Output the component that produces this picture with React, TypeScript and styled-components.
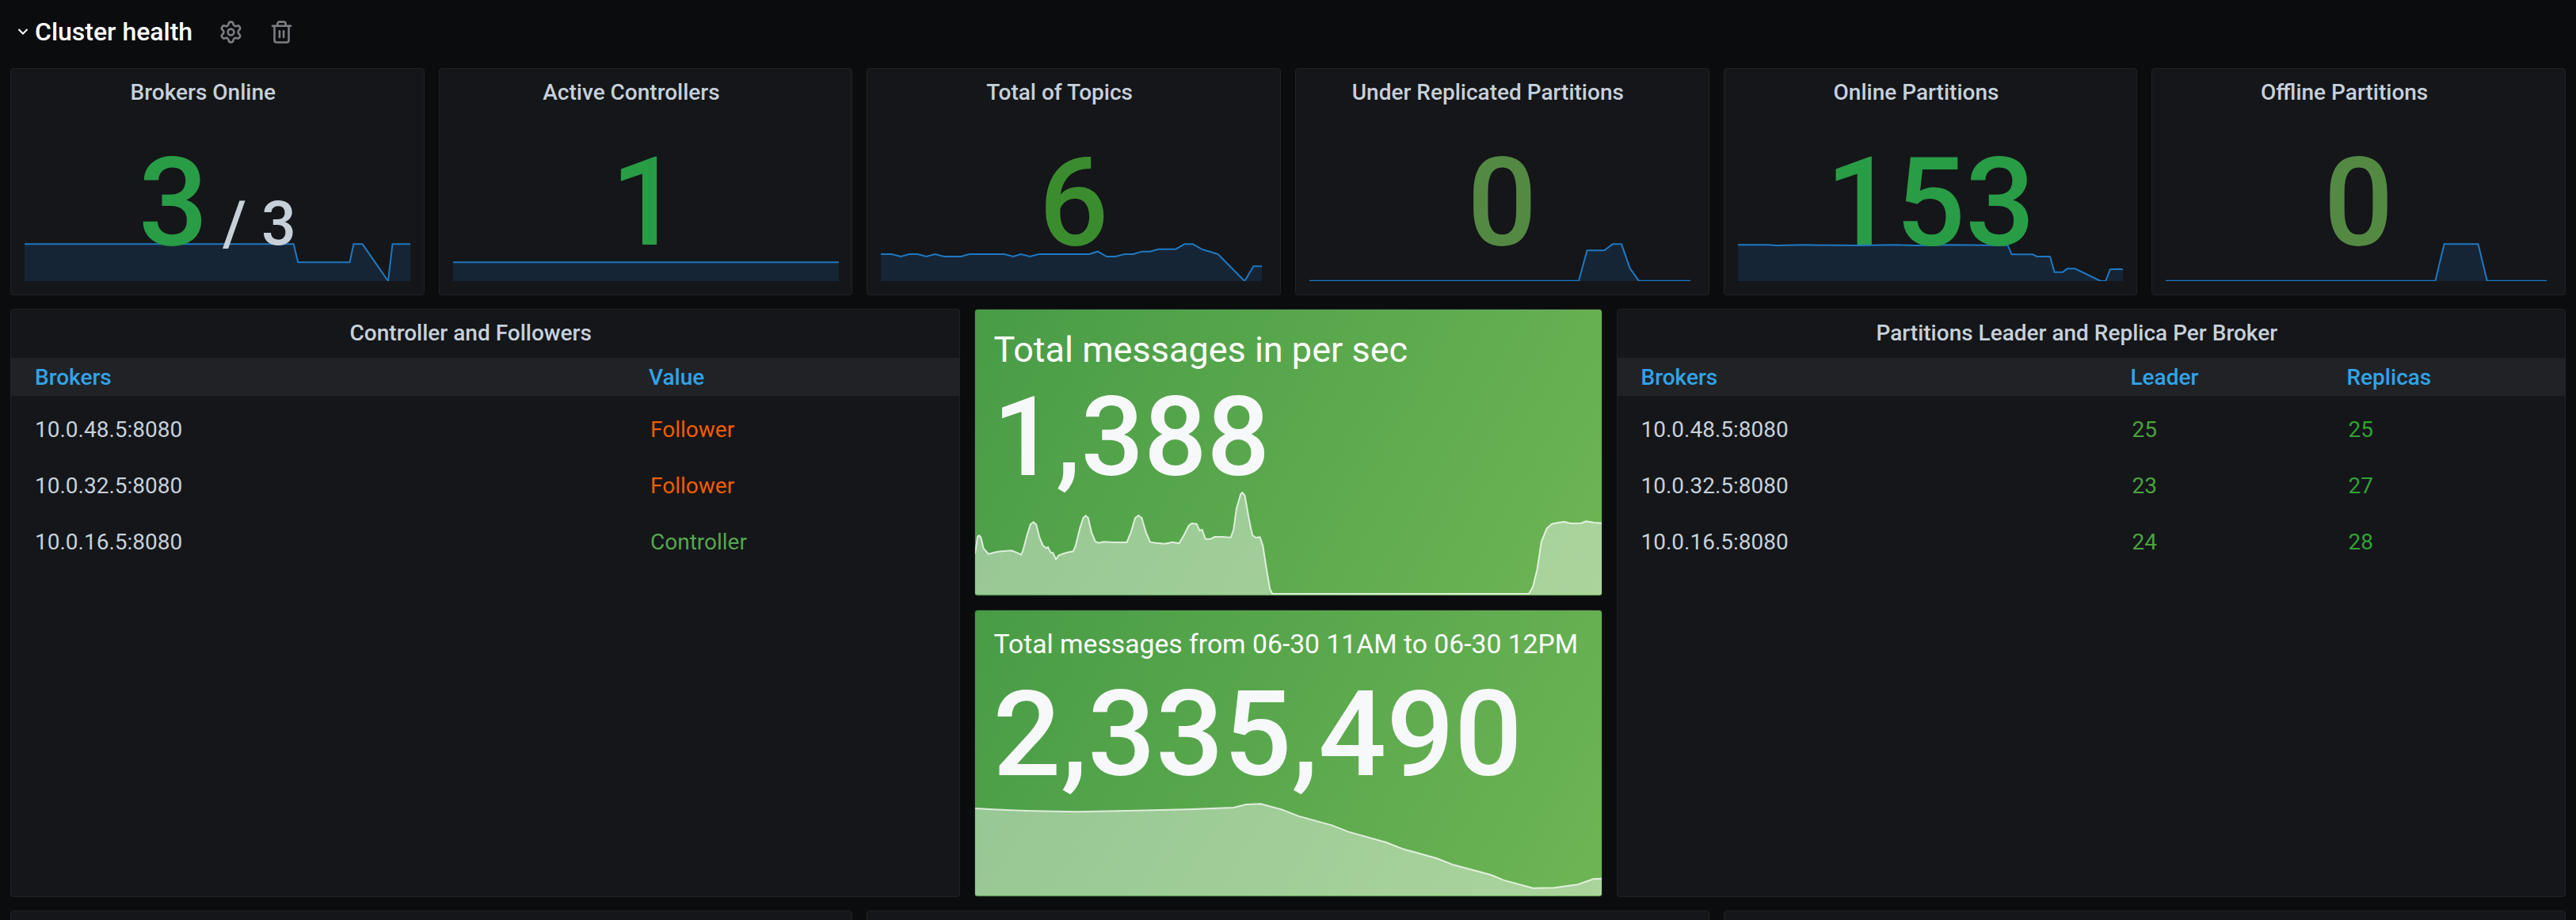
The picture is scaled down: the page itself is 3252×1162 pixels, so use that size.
import styled, { createGlobalStyle } from "styled-components";
import { Settings, Trash2 } from "lucide-react";

const GlobalStyle = createGlobalStyle`
  html, body {
    margin: 0;
    height: 100%;
    overflow: hidden;
    background: #0b0c0e;
    font-family: Roboto, "Liberation Sans", sans-serif;
  }
`;

type Series = {
  x: number;
  width: number;
  bottom: number;
  points: number[][];
};

const topPanels: {
  title: string;
  value: string;
  color: string;
  suffix?: string;
  chartWidth: number;
  series: Series;
}[] = [
  {
    title: "Brokers Online",
    value: "3",
    suffix: "/ 3",
    color: "#299c46",
    chartWidth: 487,
    series: {
      x: 43,
      width: 694,
      bottom: 1067,
      points: [[43, 927], [527, 927], [535, 996], [628, 996], [635, 927], [651, 927], [697, 1067], [705, 927], [737, 927]],
    },
  },
  {
    title: "Active Controllers",
    value: "1",
    color: "#299c46",
    chartWidth: 487,
    series: { x: 813, width: 693, bottom: 1067, points: [[813, 996], [1506, 996]] },
  },
  {
    title: "Total of Topics",
    value: "6",
    color: "#3b8c2e",
    chartWidth: 481,
    series: {
      x: 46,
      width: 685,
      bottom: 887,
      points: [
        [46, 785], [65, 785], [82, 794], [97, 785], [112, 785], [128, 794], [143, 785], [160, 794], [190, 794], [205, 785],
        [268, 785], [284, 794], [298, 785], [314, 794], [330, 785], [420, 785], [436, 775], [452, 794], [468, 794], [484, 785],
        [500, 785], [515, 775], [530, 775], [545, 766], [576, 766], [592, 747], [607, 747], [624, 767], [652, 785], [700, 887],
        [716, 831], [731, 831],
      ],
    },
  },
  {
    title: "Under Replicated Partitions",
    value: "0",
    color: "#548943",
    chartWidth: 481,
    series: {
      x: 815,
      width: 686,
      bottom: 887,
      points: [[815, 886], [1300, 886], [1315, 771], [1346, 771], [1361, 747], [1377, 747], [1392, 838], [1408, 886], [1501, 886]],
    },
  },
  {
    title: "Online Partitions",
    value: "153",
    color: "#299c46",
    chartWidth: 486,
    series: {
      x: 60,
      width: 692,
      bottom: 887,
      points: [
        [60, 750], [115, 750], [130, 752], [180, 750], [280, 752], [340, 750], [380, 752], [440, 750], [515, 751], [545, 751],
        [552, 786], [590, 786], [597, 794], [621, 794], [629, 853], [644, 853], [652, 840], [666, 840], [712, 887], [721, 887],
        [729, 843], [745, 841], [752, 843],
      ],
    },
  },
  {
    title: "Offline Partitions",
    value: "0",
    color: "#548943",
    chartWidth: 481,
    series: {
      x: 831,
      width: 684,
      bottom: 887,
      points: [[831, 886], [1315, 886], [1331, 747], [1392, 747], [1408, 886], [1515, 886]],
    },
  },
];

const ratePoints = [
  [38, 960], [44, 895], [48, 892], [52, 900], [58, 940], [70, 962], [80, 958], [90, 954], [100, 952], [125, 949],
  [135, 955], [148, 964], [152, 950], [162, 890], [170, 850], [177, 841], [184, 850], [192, 900], [200, 930], [208, 940],
  [212, 936], [218, 955], [224, 958], [231, 982], [237, 968], [250, 960], [262, 955], [272, 952], [278, 930], [288, 865],
  [296, 825], [302, 817], [308, 825], [316, 880], [325, 915], [333, 920], [345, 916], [370, 918], [400, 918], [410, 880],
  [420, 825], [428, 816], [436, 825], [446, 880], [456, 917], [470, 920], [490, 923], [510, 917], [525, 922], [535, 895],
  [548, 855], [555, 846], [567, 848], [574, 873], [580, 870], [588, 905], [600, 905], [610, 897], [630, 897], [648, 900],
  [655, 870], [662, 790], [672, 735], [676, 729], [682, 740], [692, 830], [700, 890], [708, 900], [718, 898], [725, 930],
  [735, 1030], [742, 1095], [748, 1113], [1360, 1113], [1370, 1085], [1380, 1020], [1390, 915], [1403, 865], [1415, 848],
  [1430, 843], [1445, 840], [1460, 846], [1485, 845], [1497, 838], [1515, 843], [1534, 845],
];

const totalPoints = [
  [38, 786], [80, 790], [160, 795], [280, 799], [400, 795], [540, 790], [655, 783], [685, 771], [720, 769], [770, 790],
  [810, 815], [890, 850], [930, 875], [1020, 915], [1060, 940], [1140, 975], [1180, 1000], [1270, 1038], [1300, 1058],
  [1370, 1088], [1420, 1087], [1475, 1075], [1515, 1053], [1534, 1052],
];

const Sparkline = ({ series, top, stroke, fill, lineWidth }: {
  series: Series;
  top: number;
  stroke: string;
  fill: string;
  lineWidth: number;
}) => {
  const line = series.points.map((p) => p.join(",")).join(" ");
  const last = series.x + series.width;
  const area = `${series.x},${series.bottom} ${line} ${last},${series.bottom}`;
  return (
    <svg viewBox={`${series.x} ${top} ${series.width} ${series.bottom - top}`} width="100%" height="100%" preserveAspectRatio="none">
      <polygon points={area} fill={fill} />
      <polyline points={line} fill="none" stroke={stroke} strokeWidth={lineWidth} vectorEffect="non-scaling-stroke" />
    </svg>
  );
};

export default function App() {
  return (
    <>
      <GlobalStyle />
      <Page>
        <RowHeader>
          <svg width="14" height="10" viewBox="0 0 14 10">
            <path d="M1.5 2 L7 7.5 L12.5 2" fill="none" stroke="#fff" strokeWidth="2" />
          </svg>
          <RowTitle>Cluster health</RowTitle>
          <RowActions>
            <Settings size={31} strokeWidth={2} />
            <Trash2 size={31} strokeWidth={2} />
          </RowActions>
        </RowHeader>

        <TopRow>
          {topPanels.map((p) => (
            <Panel key={p.title}>
              <PanelTitle>{p.title}</PanelTitle>
              <BigValue $color={p.color}>
                {p.value}
                {p.suffix && <Suffix>{p.suffix}</Suffix>}
              </BigValue>
              <SparkBox $width={p.chartWidth}>
                <Sparkline
                  series={p.series}
                  top={p.series.bottom - 150}
                  stroke="#1f78c1"
                  fill="#162535"
                  lineWidth={2}
                />
              </SparkBox>
            </Panel>
          ))}
        </TopRow>

        <MiddleRow>
          <Panel>
            <PanelTitle>Controller and Followers</PanelTitle>
            <TableHead $columns="775px 1fr">
              <span>Brokers</span>
              <span>Value</span>
            </TableHead>
            <TableBody>
              <TableRow $columns="777px 1fr">
                <span>10.0.48.5:8080</span>
                <Cell $color="#ee5d00">Follower</Cell>
              </TableRow>
              <TableRow $columns="777px 1fr">
                <span>10.0.32.5:8080</span>
                <Cell $color="#ee5d00">Follower</Cell>
              </TableRow>
              <TableRow $columns="777px 1fr">
                <span>10.0.16.5:8080</span>
                <Cell $color="#56a64b">Controller</Cell>
              </TableRow>
            </TableBody>
          </Panel>

          <StatColumn>
            <StatPanel>
              <StatTitle $size={45} $top={24}>Total messages in per sec</StatTitle>
              <StatValue $size={140} $top={6}>1,388</StatValue>
              <StatChart $height={139}>
                <Sparkline
                  series={{ x: 38, width: 1496, bottom: 1116, points: ratePoints }}
                  top={699}
                  stroke="rgba(255,255,255,0.75)"
                  fill="rgba(255,255,255,0.42)"
                  lineWidth={2}
                />
              </StatChart>
            </StatPanel>
            <StatPanel>
              <StatTitle $size={33.7} $top={16}>Total messages from 06-30 11AM to 06-30 12PM</StatTitle>
              <StatValue $size={151} $top={4}>2,335,490</StatValue>
              <StatChart $height={120}>
                <Sparkline
                  series={{ x: 38, width: 1496, bottom: 1116, points: totalPoints }}
                  top={756}
                  stroke="rgba(255,255,255,0.75)"
                  fill="rgba(255,255,255,0.42)"
                  lineWidth={2}
                />
              </StatChart>
            </StatPanel>
          </StatColumn>

          <Panel>
            <PanelTitle>Partitions Leader and Replica Per Broker</PanelTitle>
            <TableHead $columns="618px 273px 1fr">
              <span>Brokers</span>
              <span>Leader</span>
              <span>Replicas</span>
            </TableHead>
            <TableBody>
              <TableRow $columns="620px 273px 1fr">
                <span>10.0.48.5:8080</span>
                <Cell $color="#4ca23c">25</Cell>
                <Cell $color="#2fa332">25</Cell>
              </TableRow>
              <TableRow $columns="620px 273px 1fr">
                <span>10.0.32.5:8080</span>
                <Cell $color="#4ca23c">23</Cell>
                <Cell $color="#2fa332">27</Cell>
              </TableRow>
              <TableRow $columns="620px 273px 1fr">
                <span>10.0.16.5:8080</span>
                <Cell $color="#4ca23c">24</Cell>
                <Cell $color="#2fa332">28</Cell>
              </TableRow>
            </TableBody>
          </Panel>
        </MiddleRow>

        <BottomRow>
          <Panel />
          <Panel />
          <Panel />
        </BottomRow>
      </Page>
    </>
  );
}

const Page = styled.div`
  height: 1162px;
  padding: 0 13px;
  box-sizing: border-box;
  overflow: hidden;
`;

const RowHeader = styled.header`
  height: 86px;
  padding: 0 0 6px 9px;
  box-sizing: border-box;
  display: flex;
  align-items: center;
`;

const RowTitle = styled.h2`
  margin: 0 0 0 8px;
  color: #fff;
  font-size: 32px;
  font-weight: 500;
  line-height: 34px;
`;

const RowActions = styled.div`
  margin-left: 33px;
  display: flex;
  gap: 33px;
  color: #7b7e83;
`;

const TopRow = styled.section`
  display: grid;
  grid-template-columns: repeat(6, 1fr);
  gap: 18px;
  height: 287px;
  margin-bottom: 17px;
`;

const MiddleRow = styled.section`
  display: grid;
  grid-template-columns: 1198.5px 793px 1fr;
  gap: 18px;
  height: 743px;
  margin-bottom: 17px;
`;

const BottomRow = styled.section`
  display: grid;
  grid-template-columns: repeat(3, 1fr);
  gap: 18px;
  height: 300px;
`;

const Panel = styled.article`
  position: relative;
  box-sizing: border-box;
  background: #141619;
  border: 1px solid #202226;
  border-radius: 4px;
  overflow: hidden;
`;

const PanelTitle = styled.h3`
  margin: 0;
  height: 61px;
  padding-right: 36px;
  color: #c7d0d9;
  font-size: 28px;
  font-weight: 500;
  line-height: 59px;
  text-align: center;
`;

const BigValue = styled.div<{ $color: string }>`
  position: relative;
  z-index: 1;
  margin-top: 31px;
  color: ${(p) => p.$color};
  font-size: 155px;
  font-weight: 500;
  line-height: 155px;
  text-align: center;
`;

const Suffix = styled.span`
  margin-left: 18px;
  color: #c7d0d9;
  font-size: 77px;
`;

const SparkBox = styled.div<{ $width: number }>`
  position: absolute;
  left: 17px;
  bottom: 17px;
  width: ${(p) => p.$width}px;
  height: 50px;

  svg {
    display: block;
  }
`;

const TableHead = styled.div<{ $columns: string }>`
  display: grid;
  grid-template-columns: ${(p) => p.$columns};
  height: 48px;
  padding-left: 30px;
  align-items: center;
  background: #202226;
  color: #33a2e5;
  font-size: 28px;
  font-weight: 500;
`;

const TableBody = styled.div`
  padding-top: 7px;
`;

const TableRow = styled.div<{ $columns: string }>`
  display: grid;
  grid-template-columns: ${(p) => p.$columns};
  height: 71px;
  padding-left: 30px;
  align-items: center;
  color: #c7d0d9;
  font-size: 28px;
`;

const Cell = styled.span<{ $color: string }>`
  color: ${(p) => p.$color};
`;

const StatColumn = styled.div`
  display: flex;
  flex-direction: column;
  gap: 17px;
`;

const StatPanel = styled.article`
  position: relative;
  flex: 1;
  box-sizing: border-box;
  padding: 0 24px;
  background: linear-gradient(120deg, #489c46, #6eb555);
  border: 1px solid #202226;
  border-radius: 4px;
  overflow: hidden;
`;

const StatTitle = styled.h3<{ $size: number; $top: number }>`
  margin: 0;
  padding-top: ${(p) => p.$top}px;
  color: #fff;
  font-size: ${(p) => p.$size}px;
  font-weight: 400;
  line-height: 54px;
  white-space: nowrap;
`;

const StatValue = styled.div<{ $size: number; $top: number }>`
  margin: ${(p) => p.$top}px 0 0 -1px;
  color: #f7f8fa;
  font-size: ${(p) => p.$size}px;
  font-weight: 500;
  line-height: 1.1;
  white-space: nowrap;
`;

const StatChart = styled.div<{ $height: number }>`
  position: absolute;
  left: 0;
  right: 0;
  bottom: 1px;
  height: ${(p) => p.$height}px;

  svg {
    display: block;
  }
`;
